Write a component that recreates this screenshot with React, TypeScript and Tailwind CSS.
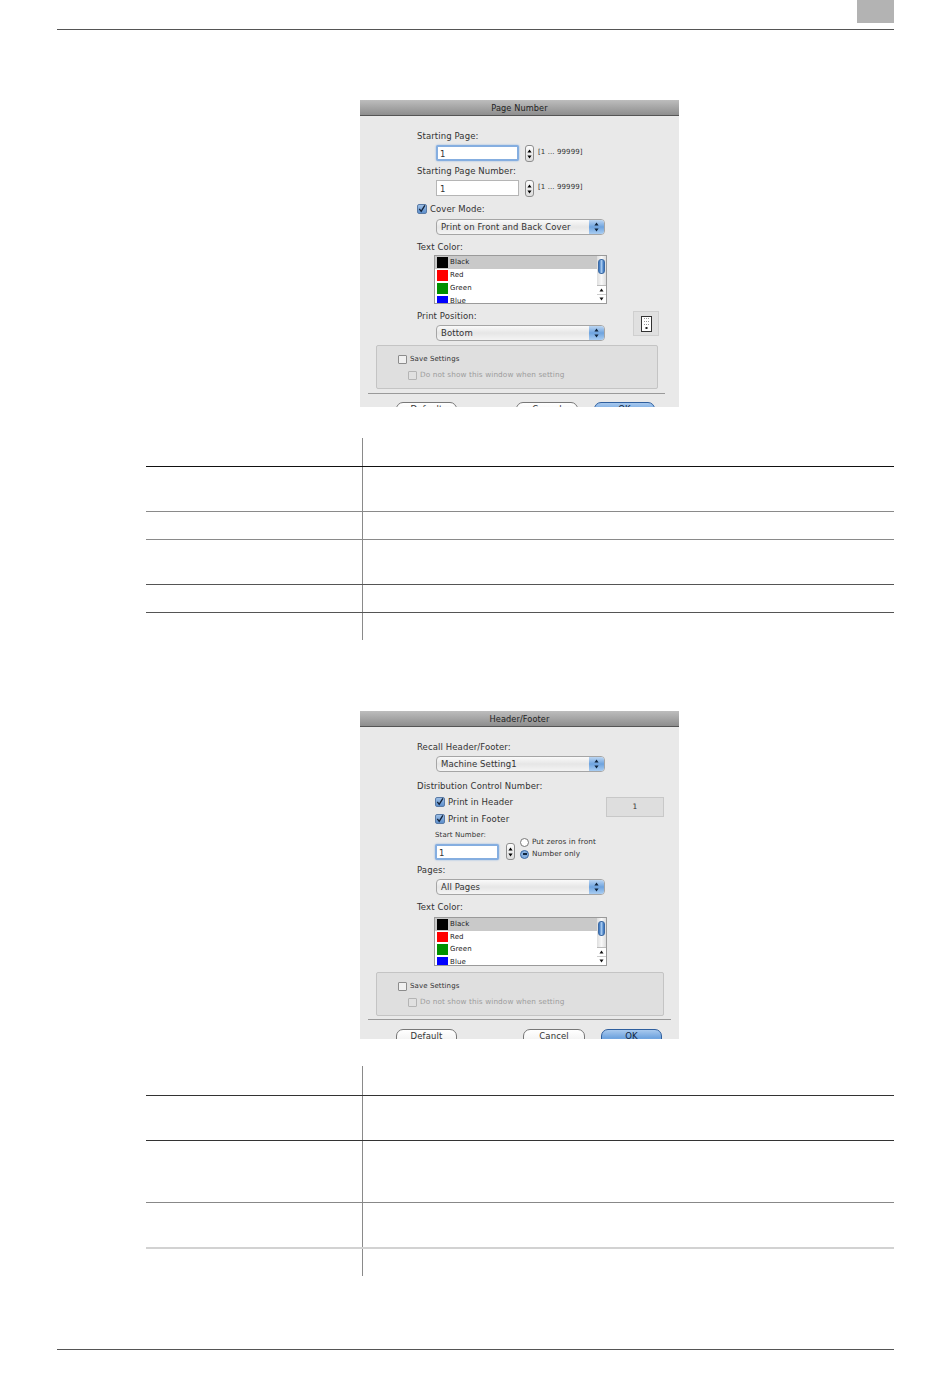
import type { ReactNode } from "react";

const UI_FONT = "font-['DejaVu_Sans',sans-serif] text-[#333] tracking-[0.1px]";

function Arrows({ className = "text-black" }: { className?: string }) {
  return (
    <svg width="5" height="10" viewBox="0 0 5 10" className={className}>
      <path d="M2.5 0.5 L4.6 3.6 H0.4 Z M2.5 9.5 L4.6 6.4 H0.4 Z" fill="currentColor" />
    </svg>
  );
}

function Label({ children, className = "" }: { children: ReactNode; className?: string }) {
  return <div className={`text-[8.5px] leading-[12px] h-[12px] ${className}`}>{children}</div>;
}

function Select({ value }: { value: string }) {
  return (
    <div className="w-[169px] h-[16px] flex rounded-[4px] border border-[#a5a5a5] overflow-hidden bg-gradient-to-b from-[#fafafa] via-[#e6e6e6] to-[#f4f4f4]">
      <div className="flex-1 pl-[4px] text-[8.5px] leading-[14px]">{value}</div>
      <div className="w-[15px] flex items-center justify-center bg-gradient-to-b from-[#bcd6f2] via-[#6ea3de] to-[#a9cdf2]">
        <Arrows className="text-[#10243c]" />
      </div>
    </div>
  );
}

function TextInput({ width, focused = false }: { width: string; focused?: boolean }) {
  return (
    <div
      className={`${width} h-[16px] bg-white text-[8.5px] ${
        focused
          ? "border-2 border-[#85aee0] rounded-[2px] leading-[14px] pl-[2px] shadow-[0_0_2px_#85aee0]"
          : "border border-[#b5b5b5] pl-[3px] leading-[16px]"
      }`}
    >
      1
    </div>
  );
}

function Stepper() {
  return (
    <div className="w-[9px] h-[17px] rounded-[3px] border border-[#8e8e8e] bg-gradient-to-b from-[#fdfdfd] to-[#dcdcdc] flex items-center justify-center">
      <Arrows />
    </div>
  );
}

function Range() {
  return <div className="ml-[4px] mt-[2px] text-[7px] leading-[10px] whitespace-nowrap">[1 ... 99999]</div>;
}

function Check({ checked = false, muted = false }: { checked?: boolean; muted?: boolean }) {
  if (checked) {
    return (
      <div className="w-[10px] h-[10px] rounded-[2px] bg-gradient-to-b from-[#9dbfe6] to-[#5d8fcc] border border-[#5a7ba6] flex items-center justify-center overflow-visible">
        <svg width="10" height="10" viewBox="0 0 10 10">
          <path d="M1.6 4.8 L4 8 L8.6 0.6" fill="none" stroke="#14233a" strokeWidth="1.7" />
        </svg>
      </div>
    );
  }
  return (
    <div className={`w-[9px] h-[9px] rounded-[1px] border ${muted ? "border-[#b4b4b4] bg-[#e0e0e0]" : "border-[#8c8c8c] bg-[#f0f0f0]"}`} />
  );
}

function Radio({ on = false }: { on?: boolean }) {
  return (
    <div
      className={`w-[9px] h-[9px] rounded-full border flex items-center justify-center ${
        on ? "border-[#3d6aa3] bg-[#84aede]" : "border-[#777] bg-white"
      }`}
    >
      {on && <div className="w-[4px] h-[2px] bg-[#10243c]" />}
    </div>
  );
}

function ColorList({ rowClass }: { rowClass: string }) {
  const colors = [
    { name: "Black", swatch: "bg-black", selected: true },
    { name: "Red", swatch: "bg-[#ff0000]", selected: false },
    { name: "Green", swatch: "bg-[#009000]", selected: false },
    { name: "Blue", swatch: "bg-[#0000ff]", selected: false },
  ];
  return (
    <div className="ml-[74px] w-[173px] h-[49px] border border-[#9a9a9a] bg-white flex overflow-hidden">
      <div className="flex-1 min-w-0">
        {colors.map((c) => (
          <div key={c.name} className={`${rowClass} flex items-center pl-[2px] ${c.selected ? "bg-[#c9c9c9]" : ""}`}>
            <div className={`w-[11px] h-full py-[1px] ${c.swatch} border-y border-transparent bg-clip-padding`} />
            <span className="ml-[2px] text-[7px] text-[#222]">{c.name}</span>
          </div>
        ))}
      </div>
      <div className="w-[9px] flex flex-col bg-gradient-to-r from-[#dedede] via-[#f8f8f8] to-[#dedede]">
        <div className="h-[15px] mt-[3px] mx-[1px] rounded-[3px] bg-gradient-to-r from-[#2f6db8] via-[#a4c8ee] to-[#2f6db8] border border-[#3d6aa3]" />
        <div className="flex-1" />
        <div className="h-[9px] flex items-center justify-center bg-white border-t border-[#bbb]">
          <svg width="5" height="4" viewBox="0 0 5 4"><path d="M2.5 0.5 L4.5 3.5 H0.5 Z" fill="#111" /></svg>
        </div>
        <div className="h-[9px] flex items-center justify-center bg-white border-t border-[#ccc]">
          <svg width="5" height="4" viewBox="0 0 5 4"><path d="M2.5 3.5 L4.5 0.5 H0.5 Z" fill="#111" /></svg>
        </div>
      </div>
    </div>
  );
}

function SaveGroup({ width }: { width: string }) {
  return (
    <div className={`ml-[16px] ${width} h-[44px] rounded-[2px] border border-[#c4c4c4] bg-[#dfdfdf] pl-[21px] pt-[8px]`}>
      <div className="flex items-center h-[10px] gap-[3px]">
        <Check />
        <span className="text-[7px] text-[#333]">Save Settings</span>
      </div>
      <div className="flex items-center h-[10px] mt-[6px] ml-[10px] gap-[3px]">
        <Check muted />
        <span className="text-[7.3px] text-[#9c9c9c]">Do not show this window when setting</span>
      </div>
    </div>
  );
}

function DialogButton({ label, width, primary = false }: { label: string; width: string; primary?: boolean }) {
  return (
    <div
      className={`${width} h-[18px] shrink-0 rounded-[7px] border text-center text-[8.5px] leading-[13px] ${
        primary
          ? "border-[#2f5f9e] bg-gradient-to-b from-[#a8c9ee] via-[#6ea3de] to-[#a9cdf2] text-[#10243c]"
          : "border-[#777] bg-gradient-to-b from-white to-[#ececec]"
      }`}
    >
      {label}
    </div>
  );
}

function Dialog({ title, height, marginTop, children }: { title: string; height: string; marginTop: string; children: ReactNode }) {
  return (
    <div className={`${marginTop} ml-[360px] w-[319px] ${height} bg-[#e9e9e9] overflow-hidden ${UI_FONT}`}>
      <div className="h-[16px] border-b border-[#555] bg-gradient-to-b from-[#bdbdbd] to-[#8e8e8e] text-center text-[8.2px] leading-[17px] text-[#222]">
        {title}
      </div>
      {children}
    </div>
  );
}

function PageNumberDialog() {
  return (
    <Dialog title="Page Number" height="h-[307px]" marginTop="mt-[70px]">
      <div className="pl-[57px] pt-[14px]">
        <Label>Starting Page:</Label>
        <div className="flex items-start ml-[19px] mt-[3px] h-[17px]">
          <TextInput width="w-[83px]" focused />
          <div className="ml-[6px]"><Stepper /></div>
          <Range />
        </div>
        <Label className="mt-[3px]">Starting Page Number:</Label>
        <div className="flex items-start ml-[19px] mt-[3px] h-[17px]">
          <TextInput width="w-[83px]" />
          <div className="ml-[6px]"><Stepper /></div>
          <Range />
        </div>
        <div className="flex items-center gap-[3px] mt-[6px] h-[12px]">
          <Check checked />
          <span className="text-[8.5px]">Cover Mode:</span>
        </div>
        <div className="ml-[19px] mt-[4px]">
          <Select value="Print on Front and Back Cover" />
        </div>
        <Label className="mt-[6px]">Text Color:</Label>
      </div>
      <div className="mt-[2px]">
        <ColorList rowClass="h-[13px]" />
      </div>
      <div className="pl-[57px] mt-[6px] flex">
        <div>
          <Label>Print Position:</Label>
          <div className="ml-[19px] mt-[3px]">
            <Select value="Bottom" />
          </div>
        </div>
        <div className="ml-[28px] mt-[1px] w-[26px] h-[25px] border border-[#cfcfcf] bg-[#e0e0e0] flex items-center justify-center">
          <svg width="11" height="16" viewBox="0 0 11 16">
            <rect x="0.5" y="0.5" width="10" height="15" fill="#fff" stroke="#333" />
            <path d="M3 2h1v1H3zM5 2h1v1H5zM7 2h1v1H7zM3 5h1v1H3zM5 5h1v1H5zM7 5h1v1H7zM3 8h1v1H3zM5 8h1v1H5zM7 8h1v1H7z" fill="#999" />
            <rect x="4.5" y="11" width="2" height="2" fill="#222" />
          </svg>
        </div>
      </div>
      <div className="mt-[4px]">
        <SaveGroup width="w-[282px]" />
      </div>
      <div className="ml-[8px] mt-[4px] w-[297px] h-[1px] bg-[#9a9a9a]" />
      <div className="flex ml-[36px] mt-[8px]">
        <DialogButton label="Default" width="w-[61px]" />
        <div className="ml-[59px]"><DialogButton label="Cancel" width="w-[62px]" /></div>
        <div className="ml-[16px]"><DialogButton label="OK" width="w-[61px]" primary /></div>
      </div>
    </Dialog>
  );
}

function HeaderFooterDialog() {
  return (
    <Dialog title="Header/Footer" height="h-[328px]" marginTop="mt-[71px]">
      <div className="pl-[57px] pt-[14px]">
        <Label>Recall Header/Footer:</Label>
        <div className="ml-[19px] mt-[3px]">
          <Select value="Machine Setting1" />
        </div>
        <Label className="mt-[8px]">Distribution Control Number:</Label>
        <div className="flex ml-[18px] mt-[4px]">
          <div className="w-[171px]">
            <div className="flex items-center gap-[3px] h-[12px]">
              <Check checked />
              <span className="text-[8.5px]">Print in Header</span>
            </div>
            <div className="flex items-center gap-[3px] h-[12px] mt-[5px]">
              <Check checked />
              <span className="text-[8.5px]">Print in Footer</span>
            </div>
          </div>
          <div className="w-[58px] h-[20px] mt-[1px] border border-[#c8c8c8] bg-[#dedede] text-center text-[7.5px] leading-[18px]">1</div>
        </div>
        <div className="flex ml-[18px] mt-[5px]">
          <div className="w-[85px]">
            <div className="text-[7px] leading-[10px] h-[10px]">Start Number:</div>
            <div className="flex items-start mt-[4px]">
              <TextInput width="w-[64px]" focused />
              <div className="ml-[7px] -mt-[1px]"><Stepper /></div>
            </div>
          </div>
          <div className="mt-[7px]">
            <div className="flex items-center gap-[3px] h-[10px]">
              <Radio />
              <span className="text-[7.3px]">Put zeros in front</span>
            </div>
            <div className="flex items-center gap-[3px] h-[10px] mt-[2px]">
              <Radio on />
              <span className="text-[7.3px]">Number only</span>
            </div>
          </div>
        </div>
        <Label className="mt-[4px]">Pages:</Label>
        <div className="ml-[19px] mt-[3px]">
          <Select value="All Pages" />
        </div>
        <Label className="mt-[6px]">Text Color:</Label>
      </div>
      <div className="mt-[4px]">
        <ColorList rowClass="h-[12.5px]" />
      </div>
      <div className="mt-[6px]">
        <SaveGroup width="w-[288px]" />
      </div>
      <div className="ml-[8px] mt-[3px] w-[303px] h-[1px] bg-[#9a9a9a]" />
      <div className="flex ml-[36px] mt-[9px]">
        <DialogButton label="Default" width="w-[61px]" />
        <div className="ml-[66px]"><DialogButton label="Cancel" width="w-[62px]" /></div>
        <div className="ml-[16px]"><DialogButton label="OK" width="w-[61px]" primary /></div>
      </div>
    </Dialog>
  );
}

type Row = { height: string; border: string };

function SpecTable({ marginTop, rows }: { marginTop: string; rows: Row[] }) {
  return (
    <div className={`${marginTop} ml-[146px] w-[748px]`}>
      {rows.map((row, i) => (
        <div key={i} className={`flex ${row.height} ${row.border}`}>
          <div className="w-[216px]" />
          <div className="flex-1 border-l border-[#8a8a8a]" />
        </div>
      ))}
    </div>
  );
}

export default function App() {
  return (
    <div className="w-[950px] h-[1379px] bg-white flex flex-col">
      <header className="ml-[57px] w-[837px] h-[30px] border-b border-[#555] flex justify-end items-start">
        <div className="w-[37px] h-[23px] bg-[#b3b3b3]" />
      </header>

      <PageNumberDialog />

      <SpecTable
        marginTop="mt-[31px]"
        rows={[
          { height: "h-[29px]", border: "border-b border-[#111]" },
          { height: "h-[45px]", border: "border-b border-[#8a8a8a]" },
          { height: "h-[28px]", border: "border-b border-[#8a8a8a]" },
          { height: "h-[45px]", border: "border-b border-[#555]" },
          { height: "h-[28px]", border: "border-b border-[#555]" },
          { height: "h-[27px]", border: "" },
        ]}
      />

      <HeaderFooterDialog />

      <SpecTable
        marginTop="mt-[27px]"
        rows={[
          { height: "h-[30px]", border: "border-b border-[#333]" },
          { height: "h-[45px]", border: "border-b border-[#333]" },
          { height: "h-[62px]", border: "border-b border-[#888]" },
          { height: "h-[46px]", border: "border-b-2 border-[#d2d2d2]" },
          { height: "h-[27px]", border: "" },
        ]}
      />

      <footer className="ml-[57px] w-[837px] mt-[73px] border-b border-[#555]" />
    </div>
  );
}
